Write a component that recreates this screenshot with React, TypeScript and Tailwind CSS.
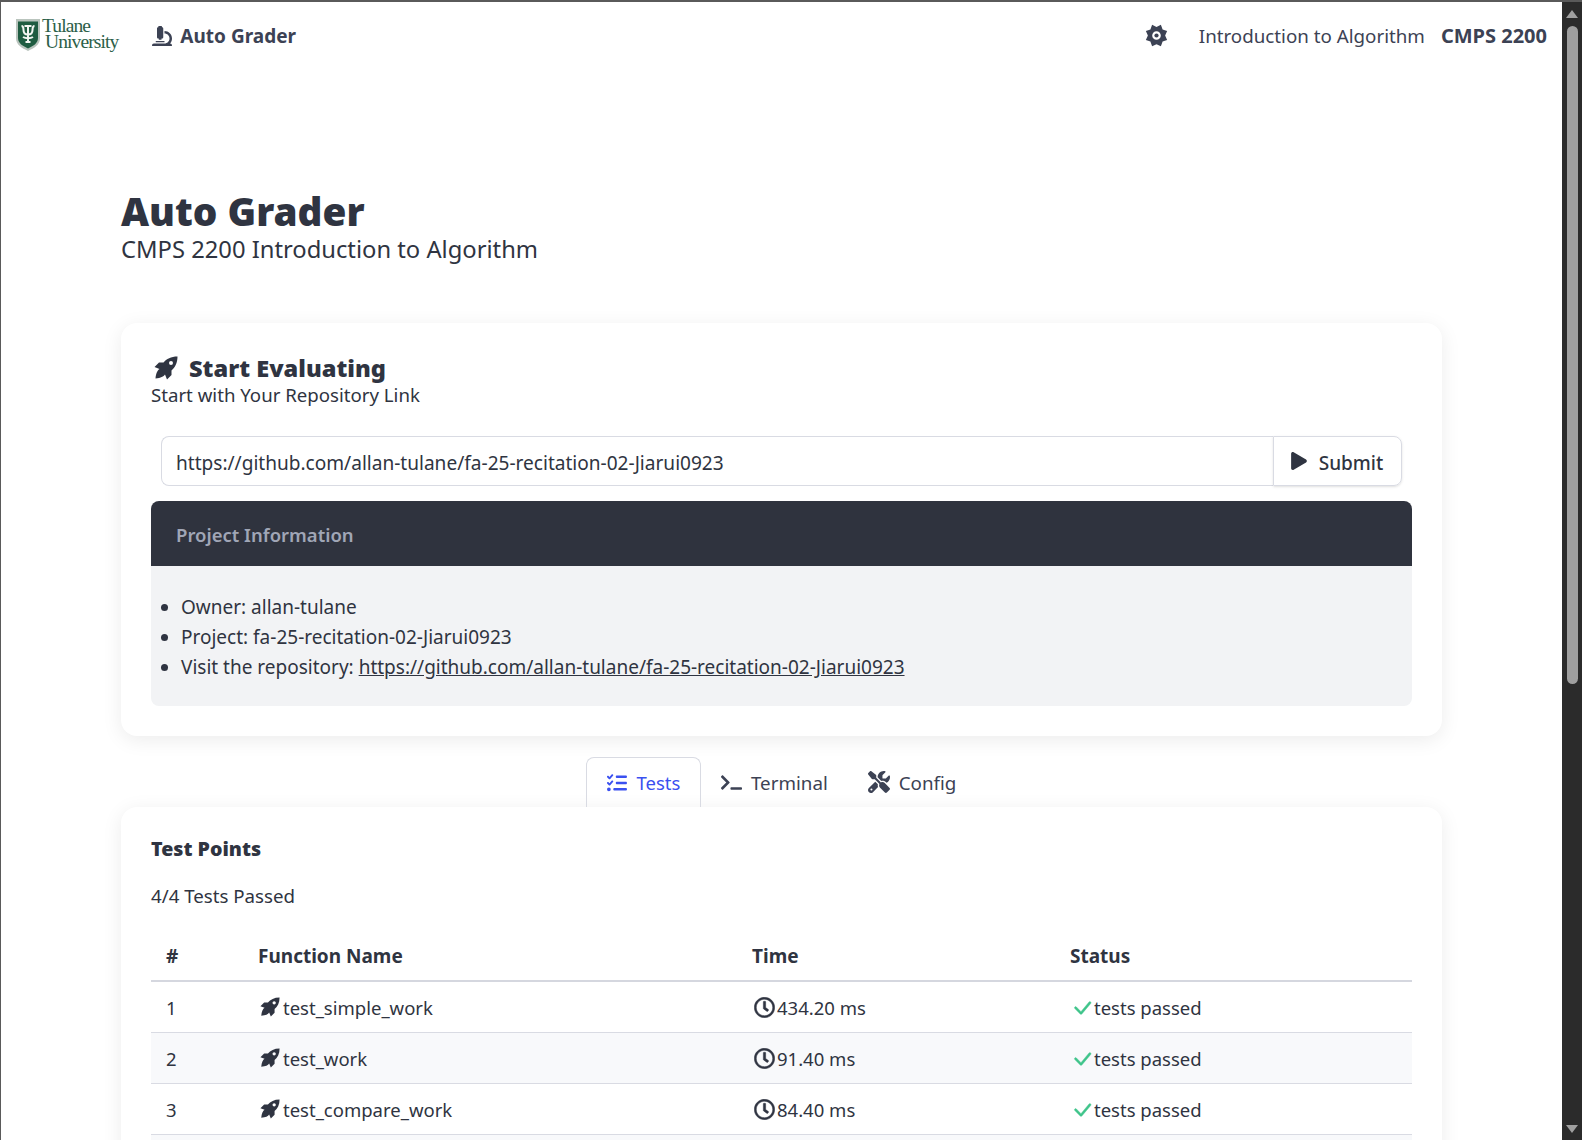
import { FaMicroscope, FaPlay, FaRegClock, FaTerminal } from "react-icons/fa";
import { FaListCheck, FaScrewdriverWrench } from "react-icons/fa6";
import { BsCheckLg } from "react-icons/bs";

const repoUrl = "https://github.com/allan-tulane/fa-25-recitation-02-Jiarui0923";

const rows = [
  { id: 1, name: "test_simple_work", time: "434.20 ms" },
  { id: 2, name: "test_work", time: "91.40 ms" },
  { id: 3, name: "test_compare_work", time: "84.40 ms" },
];

// rocket pointing up and right, with a round window near the nose
const Rocket = ({ className }: { className: string }) => (
  <svg viewBox="0 0 24 24" className={className} fill="currentColor">
    <path
      fillRule="evenodd"
      d="M23.500 .5C17 .5 12.500 3 9.500 6.500H5L.5 11l5 2C3.500 14.500 2 17 1.500 22.500 7 22 9.500 20.500 11 18.500l2 5 4.500-4.500V14.500C21 11.500 23.500 7 23.500 .5ZM17 5a2 2 0 1 1 0 4 2 2 0 0 1 0-4Z"
    />
  </svg>
);

// eight pointed teeth around a wide hole
const teeth = Array.from({ length: 16 }, (_, i) => {
  const angle = (i * Math.PI) / 8 + Math.PI / 8;
  const radius = i % 2 === 0 ? 12 : 9;
  return `${(12 + radius * Math.cos(angle)).toFixed(2)} ${(12 + radius * Math.sin(angle)).toFixed(2)}`;
}).join("L");

const Gear = ({ className }: { className: string }) => (
  <svg viewBox="0 0 24 24" className={className} fill="currentColor">
    <path
      fillRule="evenodd"
      d={`M${teeth}ZM12 7.500a4.500 4.500 0 1 0 0 9 4.500 4.500 0 0 0 0-9Z`}
    />
    <circle cx="12" cy="12" r="2.200" />
  </svg>
);

const Logo = () => (
  <div className="mb-[4px] flex items-center gap-[2px]">
    <svg width="24" height="33" viewBox="0 0 24 33">
      <path d="M0 1h24v19c0 7-6 10-12 13C6 30 0 27 0 20z" fill="#b9c4bd" />
      <path d="M2 3.500h20v16.500c0 5.500-5 8-10 10.500C7 28 2 25.500 2 20z" fill="#1f5c41" />
      <path
        d="M5.500 8c1.500 0 2 1.500 2 4 0 3 1.500 4.500 4.500 4.500s4.500-1.500 4.500-4.500c0-2.500.5-4 2-4M8.500 8h7M12 8v16M9.500 24h5M7 19c1.500 1 3 1.300 5 1.300s3.500-.3 5-1.300"
        fill="none"
        stroke="#f3f5f2"
        strokeWidth="2"
      />
    </svg>
    <div className="pl-[3px] -indent-[3px] font-['Liberation_Serif',serif] text-[19.5px] leading-[16px] tracking-[-0.9px] text-[#2c6049]">
      Tulane
      <br />
      University
    </div>
  </div>
);

const App = () => {
  return (
    <div className="flex h-screen overflow-hidden border-t-2 border-l border-[#5a5a5a] bg-white font-['Noto_Sans',sans-serif] text-[#2f3441]">
      <div className="min-w-0 flex-1 overflow-hidden">
        {/* Navbar */}
        <nav className="flex h-[68px] items-center pl-[15px] pr-[15px]">
          <Logo />
          <div className="ml-[34px] flex items-center gap-[8px] text-[19px] font-bold text-[#3c4254]">
            <FaMicroscope className="size-[20px]" />
            Auto Grader
          </div>
          <div className="ml-auto flex items-center">
            <Gear className="mb-[2px] mr-[31px] size-[23px] text-[#3c4254]" />
            <span className="text-[18.75px] text-[#3c4254]">Introduction to Algorithm</span>
            <span className="ml-[16px] text-[20px] font-bold text-[#3c4254]">CMPS 2200</span>
          </div>
        </nav>

        <main className="ml-[120px] w-[1321px]">
          {/* Heading */}
          <h1 className="mt-[118px] text-[38.7px] font-black leading-[46px]">Auto Grader</h1>
          <p className="text-[23.75px] leading-[30px]">CMPS 2200 Introduction to Algorithm</p>

          {/* Start card */}
          <section className="mt-[59px] rounded-2xl bg-white p-[30px] shadow-[0_4px_20px_rgba(0,0,0,0.08)]">
            <h2 className="flex h-[30px] items-center gap-[11px] pl-[3px] pt-[2px] text-[23.6px] font-black">
              <Rocket className="mb-[2px] size-[24px]" />
              Start Evaluating
            </h2>
            <p className="-mt-[1px] text-[18.65px] leading-[26px]">Start with Your Repository Link</p>

            <div className="mx-[10px] mt-[28px] flex h-[50px]">
              <div className="flex min-w-0 flex-1 items-center rounded-l-lg border border-r-0 border-[#d9dbe3] pl-[14px] pt-[4px] text-[19.07px]">
                {repoUrl}
              </div>
              <button className="flex w-[129px] items-center justify-center gap-[11px] rounded-r-lg border border-[#d9dbe3] pr-[2px] pt-[4px] text-[19px] font-medium shadow-sm">
                <FaPlay className="mb-[4px] size-[18px]" />
                Submit
              </button>
            </div>

            <div className="mt-[15px] overflow-hidden rounded-lg">
              <div className="flex h-[65px] items-center bg-[#2f333e] pl-[25px] pt-[3px] text-[18.5px] font-semibold text-[#a0a6b6]">
                Project Information
              </div>
              <ul className="h-[140px] list-disc bg-[#f2f3f5] pl-[30px] pt-[26px] text-[19px] leading-[30px]">
                <li>Owner: allan-tulane</li>
                <li>Project: fa-25-recitation-02-Jiarui0923</li>
                <li>
                  Visit the repository: <a className="underline">{repoUrl}</a>
                </li>
              </ul>
            </div>
          </section>

          {/* Tabs */}
          <div className="mt-[21px] flex h-[50px] items-stretch pl-[465px] text-[18.75px] text-[#3c4254]">
            <div className="flex w-[115px] items-center justify-center gap-[10px] rounded-t-lg border border-b-0 border-[#d9dbe3] text-[18.5px] text-[#3a50f0]">
              <FaListCheck className="size-[20px]" />
              Tests
            </div>
            <div className="ml-[20px] flex items-center gap-[9px] pt-[2px]">
              <FaTerminal className="mb-[2px] size-[21px]" />
              Terminal
            </div>
            <div className="ml-[40px] flex items-center gap-[9px] pt-[2px]">
              <FaScrewdriverWrench className="mb-[2px] size-[22px]" />
              Config
            </div>
          </div>

          {/* Test points */}
          <section className="rounded-t-2xl bg-white px-[30px] pt-[28px] shadow-[0_4px_20px_rgba(0,0,0,0.08)]">
            <h3 className="text-[19.6px] font-black leading-[28px]">Test Points</h3>
            <p className="mt-[19px] text-[18.7px] leading-[28px]">4/4 Tests Passed</p>
            <table className="mt-[20px] w-full table-fixed border-collapse text-left text-[18.5px]">
              <thead>
                <tr className="h-[51px] border-b-2 border-[#d5d7df] text-[19px]">
                  <th className="w-[107px] pl-[15px] pt-[2px] font-bold">#</th>
                  <th className="w-[494px] pt-[2px] font-bold">Function Name</th>
                  <th className="w-[318px] pt-[2px] font-bold">Time</th>
                  <th className="pt-[2px] font-bold">Status</th>
                </tr>
              </thead>
              <tbody>
                {rows.map((row) => (
                  <tr key={row.id} className="h-[51px] border-b border-[#d9dbe3] even:bg-[#f8f9fb]">
                    <td className="pl-[15px] pt-[2px]">{row.id}</td>
                    <td className="pt-[2px]">
                      <span className="flex items-center gap-[3px] pl-[2px]">
                        <Rocket className="mb-[2px] size-[20px]" />
                        {row.name}
                      </span>
                    </td>
                    <td className="pt-[2px]">
                      <span className="flex items-center gap-[2px] pl-[2px]">
                        <FaRegClock className="size-[21px]" stroke="currentColor" strokeWidth={12} />
                        {row.time}
                      </span>
                    </td>
                    <td className="pt-[2px]">
                      <span className="flex items-center">
                        <BsCheckLg
                          className="size-[24px] text-[#3fc48a]"
                          stroke="currentColor"
                          strokeWidth={0.3}
                        />
                        tests passed
                      </span>
                    </td>
                  </tr>
                ))}
                <tr className="h-[51px] even:bg-[#f8f9fb]">
                  <td colSpan={4} />
                </tr>
              </tbody>
            </table>
          </section>
        </main>
      </div>

      {/* Window scrollbar */}
      <div className="flex w-[20px] shrink-0 flex-col items-center bg-[#2b2b2b] pt-[8px]">
        <div className="h-0 w-0 border-x-[6px] border-b-[8px] border-x-transparent border-b-[#a0a0a0]" />
        <div className="mt-[8px] h-[658px] w-[11px] rounded-full bg-[#9f9f9f]" />
        <div className="mt-auto mb-[7px] h-0 w-0 border-x-[6px] border-t-[8px] border-x-transparent border-t-[#a0a0a0]" />
      </div>
    </div>
  );
};

export default App;
